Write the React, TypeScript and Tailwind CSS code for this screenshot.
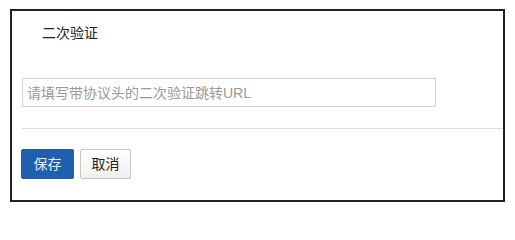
export default function App() {
  return (
    <div className="w-[515px] h-[208px] bg-white pl-[10px] pt-[9px] font-['Liberation_Sans','Noto_Sans_CJK_SC',sans-serif]">
      <div className="w-[495px] h-[193px] border-2 border-[#222] pl-[10px] pt-[12px]">
        {/* Title */}
        <div className="ml-[20px] h-[20px] leading-[20px] text-[14px] text-[#222]">二次验证</div>

        {/* URL input */}
        <input
          className="mt-[35px] block w-[414px] h-[29px] border border-[#d4d4d4] px-[4px] text-[14px] text-[#333] placeholder:text-[#9a9a9a] outline-none"
          placeholder="请填写带协议头的二次验证跳转URL"
        />

        <div className="mt-[21px] h-px bg-[#dcdcdc]" />

        {/* Actions */}
        <div className="mt-[20px] flex gap-[6px] -ml-px">
          <button className="w-[53px] h-[30px] bg-[#1f5fae] text-[#e6eefa] text-[14px] rounded-[2px]">保存</button>
          <button className="w-[51px] h-[30px] bg-gradient-to-b from-white to-[#f0f0f0] border border-[#c8c8c8] text-[#222] text-[14px] rounded-[2px]">取消</button>
        </div>
      </div>
    </div>
  )
}
